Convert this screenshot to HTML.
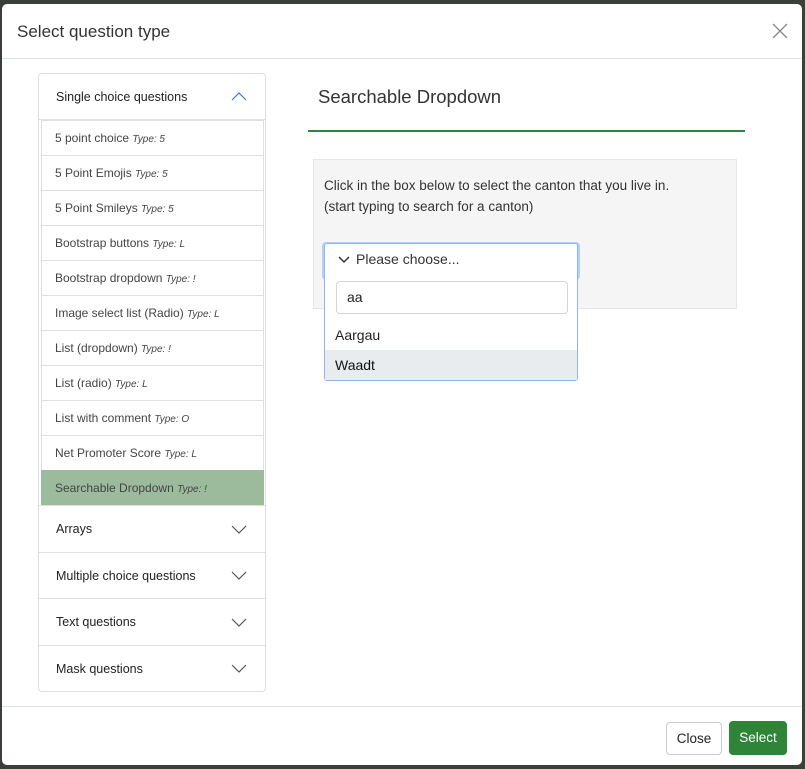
<!DOCTYPE html>
<html><head><style>
*{box-sizing:border-box;margin:0;padding:0}
body{width:805px;height:769px;background:#3a3f3a;font-family:"Liberation Sans",sans-serif;position:relative;overflow:hidden;color:#222}
.modal{position:absolute;left:2px;top:4px;width:800px;height:761px;background:#fff;border-radius:5px}
.abs{position:absolute}
.hdr{left:0;top:0;width:800px;height:55px;border-bottom:1px solid #dee2e6}
.title{left:15px;top:18px;font-size:17px;color:#333}
.panel{left:36px;top:69px;width:228px;height:619px;border:1px solid #dfdfdf;border-radius:4px}
.row{position:absolute;left:0;width:226px;font-size:12.5px;color:#222;padding-left:17px}
.item{position:absolute;left:2px;width:223px;height:35px;border-top:1px solid #dfdfdf;font-size:12px;color:#444;padding-left:13px;line-height:34px;border-left:1px solid #dfdfdf;border-right:1px solid #dfdfdf}
.item i{font-size:10px;color:#444}
.sel{background:#9cbb9d;border-color:#9cbb9d}
.chev{position:absolute;right:18px}
</style></head><body>
<div class="modal">
<div class="abs hdr"></div>
<div class="abs title">Select question type</div>
<svg class="abs" style="left:770px;top:19px" width="16" height="16"><path d="M1 1L15 15M15 1L1 15" stroke="#888" stroke-width="1.3"/></svg>
<div class="abs panel">
<div class="row" style="top:0;height:46px;line-height:46px;border-bottom:1px solid #dfdfdf">Single choice questions<svg class="chev" style="top:17px" width="16" height="10"><path d="M1 9L8 2L15 9" stroke="#3a7bd5" stroke-width="1.2" fill="none"/></svg></div>
<div class="item" style="top:46px">5 point choice <i>Type: 5</i></div>
<div class="item" style="top:81px">5 Point Emojis <i>Type: 5</i></div>
<div class="item" style="top:116px">5 Point Smileys <i>Type: 5</i></div>
<div class="item" style="top:151px">Bootstrap buttons <i>Type: L</i></div>
<div class="item" style="top:186px">Bootstrap dropdown <i>Type: !</i></div>
<div class="item" style="top:221px">Image select list (Radio) <i>Type: L</i></div>
<div class="item" style="top:256px">List (dropdown) <i>Type: !</i></div>
<div class="item" style="top:291px">List (radio) <i>Type: L</i></div>
<div class="item" style="top:326px">List with comment <i>Type: O</i></div>
<div class="item" style="top:361px">Net Promoter Score <i>Type: L</i></div>
<div class="item sel" style="top:396px">Searchable Dropdown <i>Type: !</i></div>
<div class="row" style="top:431px;height:47px;line-height:47px;border-top:1px solid #dfdfdf">Arrays<svg class="chev" style="top:19px" width="16" height="10"><path d="M1 1L8 8L15 1" stroke="#555" stroke-width="1.2" fill="none"/></svg></div>
<div class="row" style="top:478px;height:46px;line-height:46px;border-top:1px solid #dfdfdf">Multiple choice questions<svg class="chev" style="top:18px" width="16" height="10"><path d="M1 1L8 8L15 1" stroke="#555" stroke-width="1.2" fill="none"/></svg></div>
<div class="row" style="top:524px;height:47px;line-height:47px;border-top:1px solid #dfdfdf">Text questions<svg class="chev" style="top:19px" width="16" height="10"><path d="M1 1L8 8L15 1" stroke="#555" stroke-width="1.2" fill="none"/></svg></div>
<div class="row" style="top:571px;height:46px;line-height:46px;border-top:1px solid #dfdfdf">Mask questions<svg class="chev" style="top:18px" width="16" height="10"><path d="M1 1L8 8L15 1" stroke="#555" stroke-width="1.2" fill="none"/></svg></div>
</div>
<div class="abs" style="left:316px;top:82px;font-size:18.5px;color:#333">Searchable Dropdown</div>
<div class="abs" style="left:306px;top:126px;width:437px;height:2px;background:#2e8537"></div>
<div class="abs" style="left:311px;top:155px;width:424px;height:150px;background:#f5f5f5;border:1px solid #e6e6e6"></div>
<div class="abs" style="left:322px;top:171px;font-size:13.5px;line-height:21px;color:#333">Click in the box below to select the canton that you live in.<br>(start typing to search for a canton)</div>
<div class="abs" style="left:320px;top:238px;width:258px;height:38px;background:#b5d0f7;border-radius:4px"></div>
<div class="abs" style="left:322px;top:239px;width:254px;height:138px;background:#fff;border:1px solid #8fb7ee;border-radius:3px">
<svg class="abs" style="left:13px;top:12px" width="12" height="8"><path d="M1 1L6 6L11 1" stroke="#333" stroke-width="1.5" fill="none"/></svg>
<div class="abs" style="left:31px;top:7px;font-size:14px;color:#333">Please choose...</div>
<div class="abs" style="left:11px;top:37px;width:232px;height:33px;border:1px solid #d5d5d5;border-radius:4px;font-size:14px;padding:7px 10px;color:#222">aa</div>
<div class="abs" style="left:10px;top:83px;font-size:14px;color:#222">Aargau</div>
<div class="abs" style="left:0;top:106px;width:252px;height:30px;background:#e9ecef;font-size:14px;padding:7px 10px;color:#111">Waadt</div>
</div>
<div class="abs" style="left:0;top:702px;width:800px;height:1px;background:#dee2e6"></div>
<div class="abs" style="left:664px;top:718px;width:56px;height:33px;border:1px solid #ccc;border-radius:4px;font-size:13.5px;line-height:31px;text-align:center;color:#222">Close</div>
<div class="abs" style="left:727px;top:717px;width:58px;height:34px;background:#2e8537;border-radius:4px;font-size:13.5px;line-height:34px;text-align:center;color:#fff">Select</div>
</div>
</body></html>
